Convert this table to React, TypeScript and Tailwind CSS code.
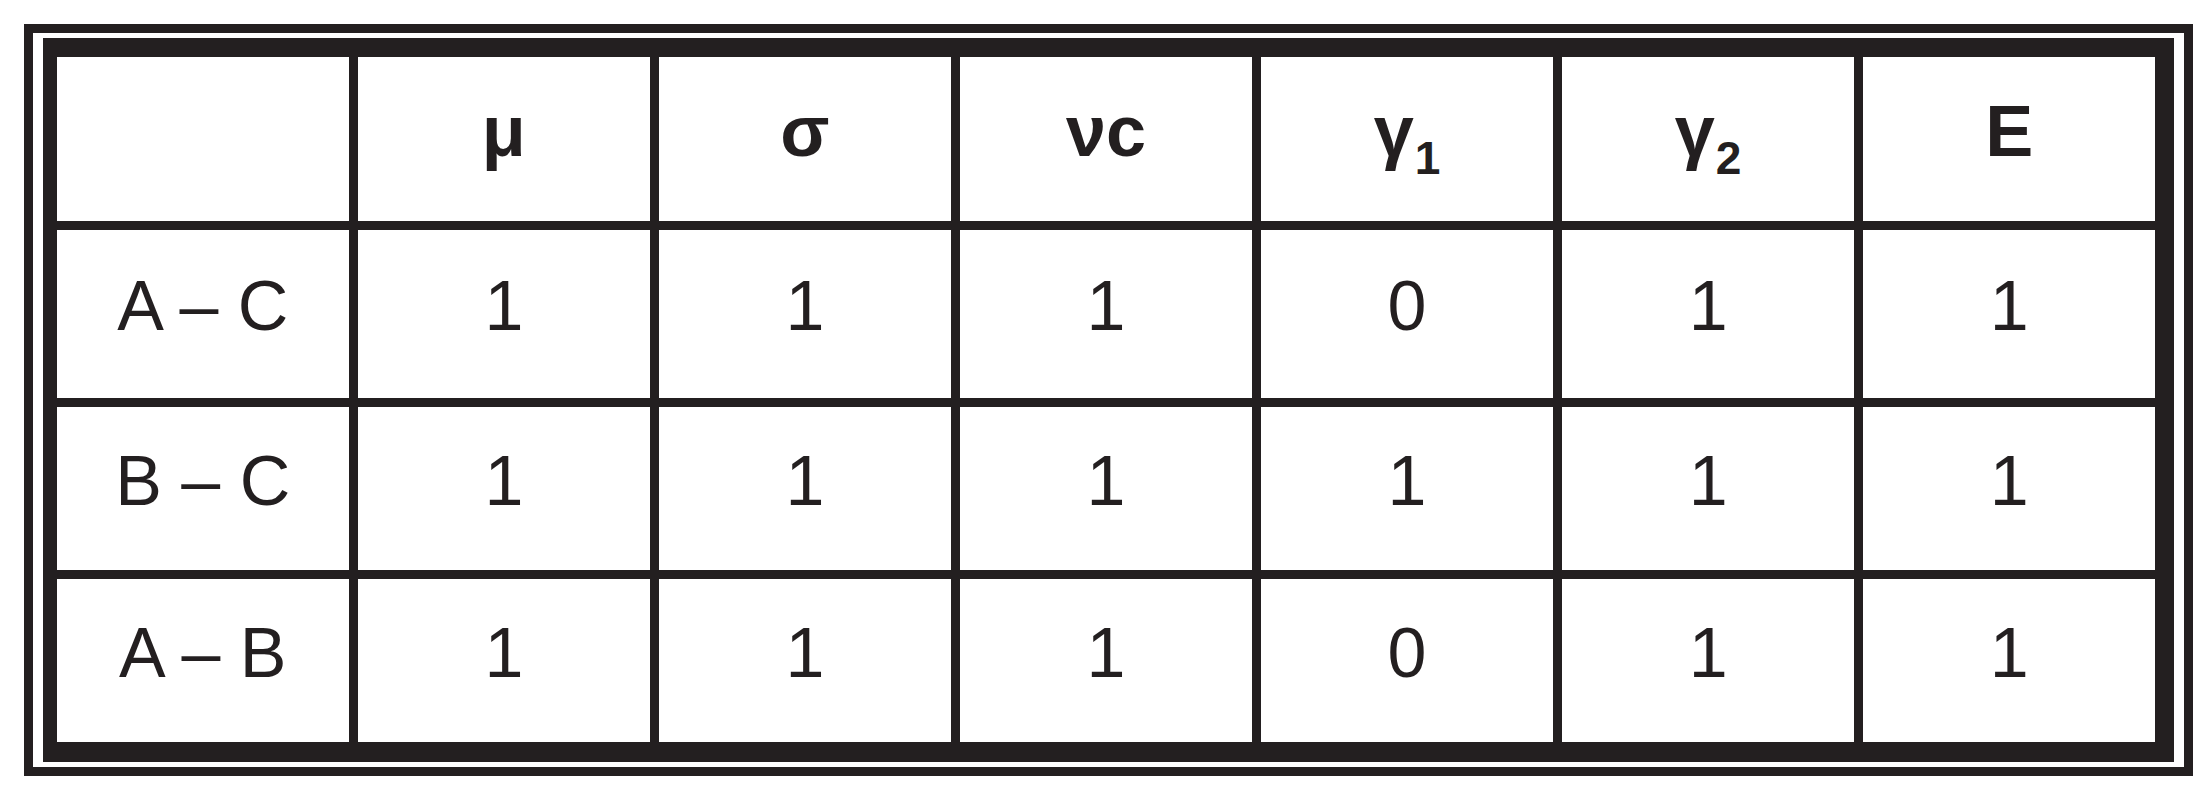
import { Fragment } from "react";

const head = [
  { label: "μ" },
  { label: "σ" },
  { label: "νc" },
  { label: "γ", sub: "1" },
  { label: "γ", sub: "2" },
  { label: "E" },
];

const rows = [
  { name: "A – C", values: [1, 1, 1, 0, 1, 1] },
  { name: "B – C", values: [1, 1, 1, 1, 1, 1] },
  { name: "A – B", values: [1, 1, 1, 0, 1, 1] },
];

const cell =
  "bg-white flex items-center justify-center pb-[16px] leading-none text-[#231f20]";

export default function App() {
  return (
    <div className="bg-white w-[2208px] h-[800px] pt-[24px] pl-[24px] font-['Liberation_Sans',Arial,sans-serif]">
      <div className="w-[2169px] border-[9px] border-[#231f20] pt-[5px] pb-[5px] px-[10px]">
        <div className="bg-[#231f20] border-[#231f20] border-l-[14px] border-t-[19px] border-r-[19px] border-b-[20px]">
          <div className="grid grid-cols-7 grid-rows-[164px_168px_163px_163px] gap-x-[9.5px] gap-y-[9px]">
            <div className={cell} />
            {head.map((h, i) => (
              <div key={i} className={`${cell} text-[72px] font-bold`}>
                <span>
                  {h.label}
                  {h.sub && (
                    <sub className="text-[0.64em] align-baseline relative top-[0.4em] ml-[1px]">
                      {h.sub}
                    </sub>
                  )}
                </span>
              </div>
            ))}
            {rows.map((r) => (
              <Fragment key={r.name}>
                <div className={`${cell} text-[70px]`}>{r.name}</div>
                {r.values.map((v, j) => (
                  <div key={j} className={`${cell} text-[70px]`}>
                    {v}
                  </div>
                ))}
              </Fragment>
            ))}
          </div>
        </div>
      </div>
    </div>
  );
}
